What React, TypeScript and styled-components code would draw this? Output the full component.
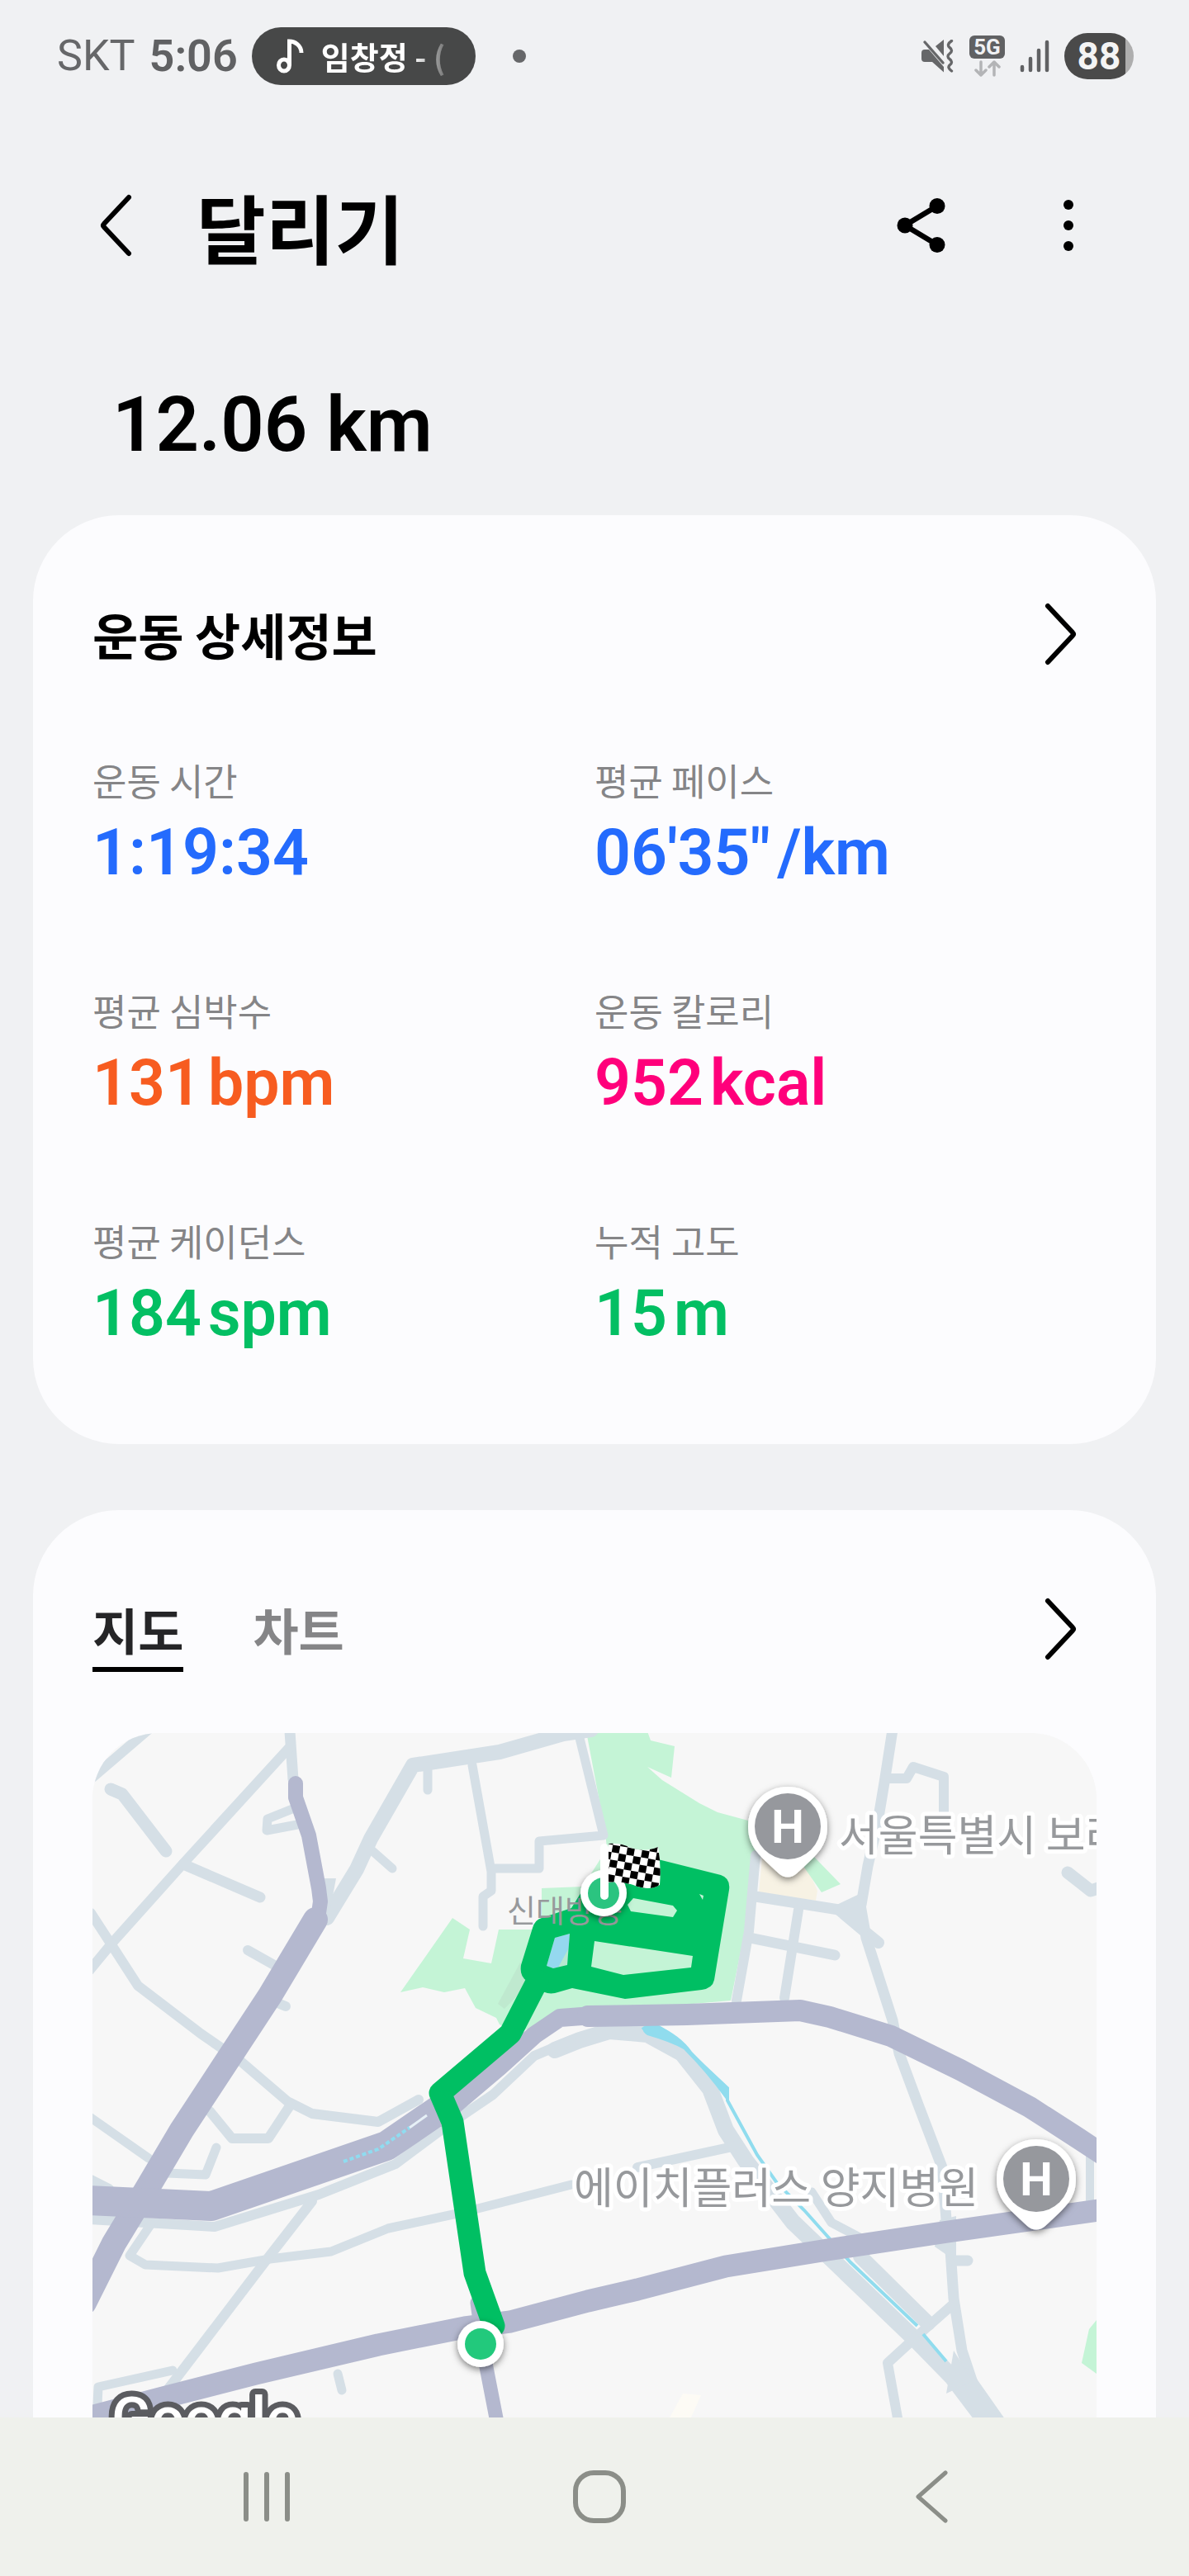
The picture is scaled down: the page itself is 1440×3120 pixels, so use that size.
import React from 'react';
import styled, { createGlobalStyle } from 'styled-components';

const latin = `Roboto, "Noto Sans CJK KR", sans-serif`;
const korean = `"Noto Sans CJK KR", sans-serif`;

const GlobalStyle = createGlobalStyle`
  * { box-sizing: border-box; }
  body { margin: 0; background: #f0f1f3; font-family: ${korean}; color: #000; }
  h1, h2, p, dl, dt, dd { margin: 0; }
  button { border: 0; padding: 0; background: none; color: inherit; font: inherit; cursor: pointer; }
  svg { display: block; flex: none; }
`;

const Screen = styled.div`
  min-height: 100vh;
  display: flex;
  flex-direction: column;
`;

/* ---------- status bar ---------- */

const StatusBar = styled.div`
  display: flex;
  align-items: center;
  justify-content: space-between;
  height: 136px;
  padding: 0 67px 0 69px;
  font-family: ${latin};
`;

const StatusGroup = styled.div<{ $gap: number }>`
  display: flex;
  align-items: center;
  gap: ${(p) => p.$gap}px;
`;

const Carrier = styled.span`
  font-size: 52px;
  line-height: 64px;
  color: #666769;
`;

const Clock = styled.time`
  font-size: 54px;
  line-height: 64px;
  font-weight: 600;
  color: #606163;
`;

const MusicPill = styled.div`
  display: flex;
  align-items: center;
  gap: 20px;
  width: 271px;
  height: 70px;
  padding: 0 24px 0 30px;
  border-radius: 35px;
  background: #474848;
  color: #fff;
`;

const Marquee = styled.span`
  flex: 1;
  overflow: hidden;
  white-space: nowrap;
  font-family: ${korean};
  font-size: 38px;
  line-height: 64px;
  font-weight: 700;
  mask-image: linear-gradient(to right, #000 68%, transparent 100%);
`;

const Dot = styled.span`
  width: 16px;
  height: 16px;
  margin-left: 28px;
  border-radius: 50%;
  background: #666769;
`;

const Network = styled.div`
  display: flex;
  flex-direction: column;
  align-items: center;
  gap: 2px;
`;

const NetworkBadge = styled.span`
  width: 43px;
  border-radius: 6px;
  background: #606163;
  color: #f0f1f3;
  font-size: 26px;
  line-height: 28px;
  font-weight: 700;
  text-align: center;
`;

const Battery = styled.div<{ $level: number }>`
  width: 84px;
  border-radius: 28px;
  background: linear-gradient(to right, #4a4a4a ${(p) => p.$level}%, #aeaeae ${(p) => p.$level}%);
  color: #f4f4f4;
  font-size: 46px;
  line-height: 56px;
  font-weight: 700;
  text-align: center;
`;

/* ---------- header ---------- */

const Header = styled.header`
  display: flex;
  align-items: center;
  height: 274px;
  padding: 0 104px 0 98px;
`;

const Title = styled.h1`
  flex: 1;
  margin-left: 56px;
  font-size: 91px;
  line-height: 130px;
  font-weight: 700;
`;

const IconButton = styled.button`
  display: grid;
  place-items: center;
  width: 84px;
  height: 84px;
`;

const HeaderActions = styled.div`
  display: flex;
  gap: 94px;
`;

const Distance = styled.p`
  padding: 50px 136px 54px;
  font-family: ${latin};
  font-size: 92px;
  line-height: 110px;
  font-weight: 600;
`;

/* ---------- cards ---------- */

const Content = styled.main`
  flex: 1;
  display: flex;
  flex-direction: column;
  gap: 80px;
  padding: 0 40px;
`;

const Card = styled.section`
  padding: 102px 72px 113px;
  border-radius: 104px;
  background: #fcfcfe;
`;

const MapCard = styled(Card)`
  flex: 1;
  display: flex;
  flex-direction: column;
  padding-bottom: 0;
  border-radius: 104px 104px 0 0;
`;

const CardHeader = styled.div`
  display: flex;
  align-items: flex-start;
  justify-content: space-between;
`;

const CardTitle = styled.h2`
  font-size: 60px;
  line-height: 84px;
  font-weight: 700;
`;

const Stats = styled.dl`
  display: grid;
  grid-template-columns: 1fr 1fr;
  row-gap: 116px;
  margin-top: 105px;
`;

const StatLabel = styled.dt`
  font-size: 45px;
  line-height: 60px;
  color: #858587;
`;

const StatValue = styled.dd<{ $color: string }>`
  display: flex;
  gap: 8px;
  margin-top: 13px;
  font-family: ${latin};
  font-size: 77px;
  line-height: 90px;
  font-weight: 600;
  color: ${(p) => p.$color};
`;

const Tabs = styled.div`
  display: flex;
  gap: 84px;
`;

const Tab = styled.button<{ $active?: boolean }>`
  padding-bottom: 4px;
  border-bottom: 6px solid ${(p) => (p.$active ? '#000' : 'transparent')};
  font-size: 60px;
  line-height: 84px;
  font-weight: 700;
  color: ${(p) => (p.$active ? '#252527' : '#858587')};
`;

const MapFrame = styled.div`
  flex: 1;
  min-height: 600px;
  margin-top: 74px;
  border-radius: 80px 80px 0 0;
  overflow: hidden;
  position: relative;
  background: #f7f7f7;
`;

const MapDrawing = styled.svg`
  position: absolute;
  inset: 0;
  width: 100%;
  height: 100%;
`;

const MapLabel = styled.text<{ $small?: boolean }>`
  font-family: ${korean};
  font-size: ${(p) => (p.$small ? 38 : 52)}px;
  font-weight: 400;
  fill: #97999c;
  stroke: ${(p) => (p.$small ? 'none' : '#fff')};
  stroke-width: 10px;
  stroke-linejoin: round;
  paint-order: stroke;
`;

const PinLetter = styled.text`
  font-family: ${latin};
  font-size: 56px;
  font-weight: 700;
  fill: #fff;
  text-anchor: middle;
`;

const MapLogo = styled.text`
  font-family: ${latin};
  font-size: 71px;
  font-weight: 500;
  fill: #fff;
  stroke: #5b5c60;
  stroke-width: 14px;
  stroke-linejoin: round;
  paint-order: stroke;
`;

/* ---------- system navigation ---------- */

const NavBar = styled.nav`
  position: sticky;
  bottom: 0;
  display: grid;
  grid-template-columns: repeat(3, 1fr);
  place-items: center;
  height: 192px;
  padding: 0 110px 0 122px;
  background: #eff1ec;
  color: #8b8e88;
`;

/* ---------- icons ---------- */

const NoteIcon = () => (
  <svg width="34" height="42" viewBox="0 0 34 42" fill="none" stroke="#fff" strokeWidth="5" aria-hidden="true">
    <ellipse cx="9" cy="32" rx="6.5" ry="7" />
    <path d="M15.5 32V3C22 3 30 8 30 17" />
  </svg>
);

const MuteIcon = () => (
  <svg width="40" height="40" viewBox="0 0 40 40" aria-hidden="true">
    <g fill="#666769">
      <path d="M4 12H9L27 33V39.5L13 27H4Q0 27 0 23V16Q0 12 4 12Z" />
      <path d="M17 8L27 0V20Z" />
    </g>
    <path d="M4 3L26 28" stroke="#666769" strokeWidth="3.4" strokeLinecap="round" />
    <path d="M36.500 1.500Q30 6 34 9.500Q39 13 34 17Q30 20 34 23.500Q39 27 34 31Q31 34 36.500 38" fill="none" stroke="#666769" strokeWidth="3.400" strokeLinecap="round" />
  </svg>
);

const DataArrows = () => (
  <svg width="34" height="20" viewBox="0 0 34 20" fill="none" stroke="#b3b4b6" strokeWidth="3.5" strokeLinecap="round" strokeLinejoin="round" aria-hidden="true">
    <path d="M9 2V18M3 12L9 18L15 12M25 18V2M19 8L25 2L31 8" />
  </svg>
);

const SignalIcon = () => (
  <svg width="36" height="40" viewBox="0 0 36 40" stroke="#606163" strokeWidth="4.500" strokeLinecap="round" aria-hidden="true">
    <path d="M3 33V37M13 23V37M23 13V37M33 3V37" />
  </svg>
);

const Chevron = ({ back = false }: { back?: boolean }) => (
  <svg width="84" height="84" viewBox="0 0 84 84" fill="none" stroke="currentColor" strokeWidth="6" strokeLinecap="round" strokeLinejoin="round" aria-hidden="true">
    <path d={back ? 'M58 8L28 40Q26 42 28 44L58 76' : 'M25 8L55 40Q57 42 55 44L25 76'} />
  </svg>
);

const ShareIcon = () => (
  <svg width="84" height="84" viewBox="0 0 84 84" aria-hidden="true">
    <path d="M61 18.500L22 42L61 65.500" fill="none" stroke="#000" strokeWidth="6.500" />
    <circle cx="61" cy="18.500" r="9.500" />
    <circle cx="22" cy="42" r="9.500" />
    <circle cx="61" cy="65.500" r="9.500" />
  </svg>
);

const MoreIcon = () => (
  <svg width="84" height="84" viewBox="0 0 84 84" aria-hidden="true">
    <circle cx="42" cy="17" r="6" />
    <circle cx="42" cy="42" r="6" />
    <circle cx="42" cy="67" r="6" />
  </svg>
);

/* ---------- map ---------- */

const minorRoads: Array<[number, string]> = [
  [12, 'M70 -6L0 54'],
  [15, 'M22 68L36 74L89 143'],
  [13, 'M239 -2L243 56'],
  [12, 'M238 18L110 158L24 254L-4 288'],
  [13, 'M110 159L203 199'],
  [12, 'M-2 218L24 258L55 306L131 364L180 398L236 446L266 461L346 471L395 444'],
  [12, 'M240 450L213 491H169L142 458'],
  [11, 'M-2 466L68 515'],
  [11, 'M150 502L137 535L90 533'],
  [11, 'M242 92L212 104L211 118L248 111'],
  [12, 'M188 263L220 281M217 324L234 331'],
  [18, 'M604 -4L570 1L493 23L388 39L337 128L320 165L284 224'],
  [11, 'M406 41V69'],
  [11, 'M460 39L483 168V191L473 198V234'],
  [11, 'M487 164H541V131L619 124L589 2'],
  [11, 'M337 141L363 164'],
  [13, 'M969 -4L960 54L951 108L939 161L931 208'],
  [12, 'M960 55H986L994 41L1031 53V96'],
  [15, 'M1181 169L1209 191L1224 186'],
  [12, 'M803 148L795 240L780 324'],
  [13, 'M803 198L904 214L931 201'],
  [14, 'M904 214L930 236L952 254'],
  [13, 'M930 208L937 248L969 348L977 388L1000 450L1029 526L1034 589L1039 626L1043 685L1053 748L1067 790'],
  [13, 'M796 248L899 269'],
  [12, 'M855 214L838 321'],
  [20, 'M560 384L590 372L626 361L672 365L714 388L748 431L767 481L791 518L848 592L999 737L1041 780L1094 850'],
  [22, 'M1056 780L1105 850'],
  [11, 'M871 556L895 593L937 615'],
  [18, 'M930 634L1012 715'],
  [12, 'M999 730L1041 693M999 730L963 763L976 835'],
  [13, 'M1043 639H1060'],
  [12, 'M660 526L780 500'],
  [12, 'M-4 540L20 552'],
  [12, 'M-2 589L148 598L274 559L367 522L426 478L485 438L535 391L580 372'],
  [11, 'M70 596L45 633L64 644L152 648L215 637L289 628L358 600L451 580L580 547'],
  [12, 'M266 567L207 643L89 798'],
  [11, 'M5 835L7 792L97 772'],
  [11, 'M297 776L302 796'],
  [10, 'M1208 505V575'],
];

const majorRoads: Array<[number, string]> = [
  [18, 'M246 61V78L262 124L274 188L276 204L272 232'],
  [30, 'M270 226L215 318L108 481L66 552L26 618L-10 690'],
  [36, 'M-6 566L144 573L356 500L422 455'],
  [22, 'M420 466L493 404L535 366L566 345L620 341'],
  [26, 'M600 343L720 341L857 336L893 344L967 367L1051 408L1135 453L1194 491L1226 512'],
  [27, 'M-10 830L85 805L198 776L346 741L451 720L506 713L600 688L660 674L767 646L890 626L1036 604L1226 577'],
  [17, 'M466 690L476 763L490 835'],
];

const parkPath =
  'M598 -2H672L676 9L705 16L701 54L672 41L690 57L735 85L757 96L794 106L809 150L800 170L788 250L773 324L590 340L515 362L493 353L489 345L464 333L451 309L426 314L400 308L373 314L436 224L457 238L449 273L483 279L492 238H544V188L594 186L623 140L621 120Z';

const routeLoop =
  'M544 224L580 212L600 180L640 153H685L761 172Q773 176 771 190L753 299Q751 309 738 311L645 322L581 309L560 315Q548 317 540 309L526 300Q517 295 519 281L533 236Q536 226 544 224Z' +
  'M560 248L578 243L575 281L558 285L550 282Z' +
  'M608 252L727 270L725 284L643 293L604 283Z' +
  'M655 200L703 209L708 215L703 223L652 216L648 208Z' +
  'M735 195L740 197L739 202Z';

const flagCells = Array.from({ length: 56 }, (_, i) => [i % 8, Math.floor(i / 8)]).filter(
  ([c, r]) => (c + r) % 2 === 0,
);

const HospitalPin = ({ x, y }: { x: number; y: number }) => (
  <g transform={`translate(${x} ${y})`}>
    <path
      d="M0 -48C27 -48 48 -27 48 0C48 21 38 31 27 42L11 57Q0 66 -11 57L-27 42C-38 31 -48 21 -48 0C-48 -27 -27 -48 0 -48Z"
      fill="#fff"
      filter="url(#shadow)"
    />
    <circle r="40" fill="#96989d" />
    <PinLetter y="20">H</PinLetter>
  </g>
);

const RouteMap = () => (
  <MapDrawing viewBox="0 0 1216 829" preserveAspectRatio="xMidYMin slice" role="img" aria-label="달리기 경로 지도">
    <defs>
      <filter id="shadow" x="-30%" y="-30%" width="160%" height="160%">
        <feDropShadow dx="0" dy="3" stdDeviation="4" floodColor="#000" floodOpacity="0.5" />
      </filter>
      <clipPath id="flag">
        <path d="M625 134Q640 133 652 139Q668 145 685 138Q689 160 687 184Q676 191 660 186Q640 178 625 181Z" />
      </clipPath>
    </defs>
    <rect x="-400" width="2016" height="829" fill="#f7f7f7" />
    <path d={parkPath} fill="#c4f4d6" />
    <path d="M518 278L491 328L499 334L531 301Z" fill="#bfe9cf" />
    <path d="M811 152L866 164L878 191L876 203L807 193Z" fill="#f7f2e4" />
    <path d="M874 150L906 183L883 193L860 160ZM1216 711L1207 722L1198 763L1216 776Z" fill="#c4f4d6" />
    <path d="M715 800L737 802L725 829H699Z" fill="#fdfbf5" />
    <g fill="none" stroke="#d5dfe6" strokeLinecap="round" strokeLinejoin="round">
      {minorRoads.map(([width, d]) => (
        <path key={d} d={d} strokeWidth={width} />
      ))}
    </g>
    <path d="M904 214L933 196L940 250ZM1034 800L1043 748L1066 785ZM274 176H295L286 224H272ZM1026 590L1046 585V640L1020 622Z" fill="#d5dfe6" />
    <path d="M666 359Q672 354 684 355Q708 368 724 388L769 430V445L805 511L829 545L862 578L895 615L918 641L999 718M1006 728L1034 761" fill="none" stroke="#90dcee" strokeWidth="4" />
    <path d="M668 356Q676 350 684 354Q712 366 726 386L769 430V446Q745 412 716 383Q700 374 672 366Q664 361 668 356Z" fill="#90dcee" />
    <g fill="none" stroke="#b4b8cf" strokeLinecap="round" strokeLinejoin="round">
      {majorRoads.map(([width, d]) => (
        <path key={d} d={d} strokeWidth={width} />
      ))}
    </g>
    <path d="M304 519L346 504L384 478" fill="none" stroke="#8fdcf0" strokeWidth="4" strokeDasharray="5 3" />
    <path d="M384 478L405 463" stroke="#e6f0f7" strokeWidth="3" />
    <path d="M560 248L578 243L575 281L558 285L550 282Z" fill="#95d8ef" />
    <path d="M576 262L575 281L564 284Z" fill="#b7e8cf" />
    <path d={routeLoop} fill="#00bf63" fillRule="evenodd" />
    <path d="M539 300L506 364L421 436L436 471L463 654L486 718" fill="none" stroke="#00bf63" strokeWidth="27" strokeLinecap="round" strokeLinejoin="round" />
    <MapLabel $small x="502" y="229">신대방동</MapLabel>

    <g filter="url(#shadow)">
      <circle cx="470" cy="740" r="28" fill="#fff" />
    </g>
    <circle cx="470" cy="740" r="19" fill="#22c97c" />
    <circle cx="619" cy="194" r="28" fill="#fff" filter="url(#shadow)" />
    <circle cx="619" cy="194" r="19" fill="#2bc480" />
    <path d="M620 139V197" stroke="#fff" strokeWidth="10" strokeLinecap="round" />
    <g clipPath="url(#flag)">
      <rect x="620" y="130" width="72" height="66" fill="#fff" />
      <g transform="translate(623 125) rotate(10)">
        {flagCells.map(([c, r]) => (
          <rect key={`${c}-${r}`} x={c * 9} y={r * 9} width="9" height="9" fill="#000" />
        ))}
      </g>
    </g>

    <MapLabel x="904" y="143">서울특별시 보라매병원</MapLabel>
    <MapLabel x="583" y="570">에이치플러스 양지병원</MapLabel>
    <HospitalPin x={842} y={113} />
    <HospitalPin x={1143} y={540} />
    <MapLogo x="23" y="854">Google</MapLogo>
  </MapDrawing>
);

/* ---------- data ---------- */

const stats = [
  { label: '운동 시간', value: '1:19:34', color: '#246bfd' },
  { label: '평균 페이스', value: `06'35"`, unit: '/km', color: '#246bfd' },
  { label: '평균 심박수', value: '131', unit: 'bpm', color: '#f75c20' },
  { label: '운동 칼로리', value: '952', unit: 'kcal', color: '#ff007b' },
  { label: '평균 케이던스', value: '184', unit: 'spm', color: '#03bf63' },
  { label: '누적 고도', value: '15', unit: 'm', color: '#03bf63' },
];

export default function App() {
  return (
    <Screen>
      <GlobalStyle />
      <StatusBar>
        <StatusGroup $gap={17}>
          <Carrier>SKT</Carrier>
          <Clock>5:06</Clock>
          <MusicPill>
            <NoteIcon />
            <Marquee>임창정 - (</Marquee>
          </MusicPill>
          <Dot />
        </StatusGroup>
        <StatusGroup $gap={18}>
          <MuteIcon />
          <Network>
            <NetworkBadge>5G</NetworkBadge>
            <DataArrows />
          </Network>
          <SignalIcon />
          <Battery $level={88}>88</Battery>
        </StatusGroup>
      </StatusBar>

      <Header>
        <IconButton aria-label="뒤로">
          <Chevron back />
        </IconButton>
        <Title>달리기</Title>
        <HeaderActions>
          <IconButton aria-label="공유">
            <ShareIcon />
          </IconButton>
          <IconButton aria-label="더보기">
            <MoreIcon />
          </IconButton>
        </HeaderActions>
      </Header>

      <Distance>12.06 km</Distance>

      <Content>
        <Card>
          <CardHeader>
            <CardTitle>운동 상세정보</CardTitle>
            <IconButton aria-label="운동 상세정보 보기">
              <Chevron />
            </IconButton>
          </CardHeader>
          <Stats>
            {stats.map((s) => (
              <div key={s.label}>
                <StatLabel>{s.label}</StatLabel>
                <StatValue $color={s.color}>
                  <span>{s.value}</span>
                  {s.unit && <span>{s.unit}</span>}
                </StatValue>
              </div>
            ))}
          </Stats>
        </Card>

        <MapCard>
          <CardHeader>
            <Tabs role="tablist">
              <Tab role="tab" aria-selected="true" $active>지도</Tab>
              <Tab role="tab" aria-selected="false">차트</Tab>
            </Tabs>
            <IconButton aria-label="지도 보기">
              <Chevron />
            </IconButton>
          </CardHeader>
          <MapFrame>
            <RouteMap />
          </MapFrame>
        </MapCard>
      </Content>

      <NavBar>
        <IconButton aria-label="최근 앱">
          <svg width="84" height="84" viewBox="0 0 84 84" stroke="currentColor" strokeWidth="6" strokeLinecap="round">
            <path d="M17 15V69M42 15V69M67 15V69" />
          </svg>
        </IconButton>
        <IconButton aria-label="홈">
          <svg width="84" height="84" viewBox="0 0 84 84" fill="none" stroke="currentColor" strokeWidth="6">
            <rect x="13" y="13" width="58" height="58" rx="22" />
          </svg>
        </IconButton>
        <IconButton aria-label="이전">
          <svg width="84" height="84" viewBox="0 0 84 84" fill="none" stroke="currentColor" strokeWidth="5" strokeLinecap="round" strokeLinejoin="round">
            <path d="M58 13L25 42L58 71" />
          </svg>
        </IconButton>
      </NavBar>
    </Screen>
  );
}
